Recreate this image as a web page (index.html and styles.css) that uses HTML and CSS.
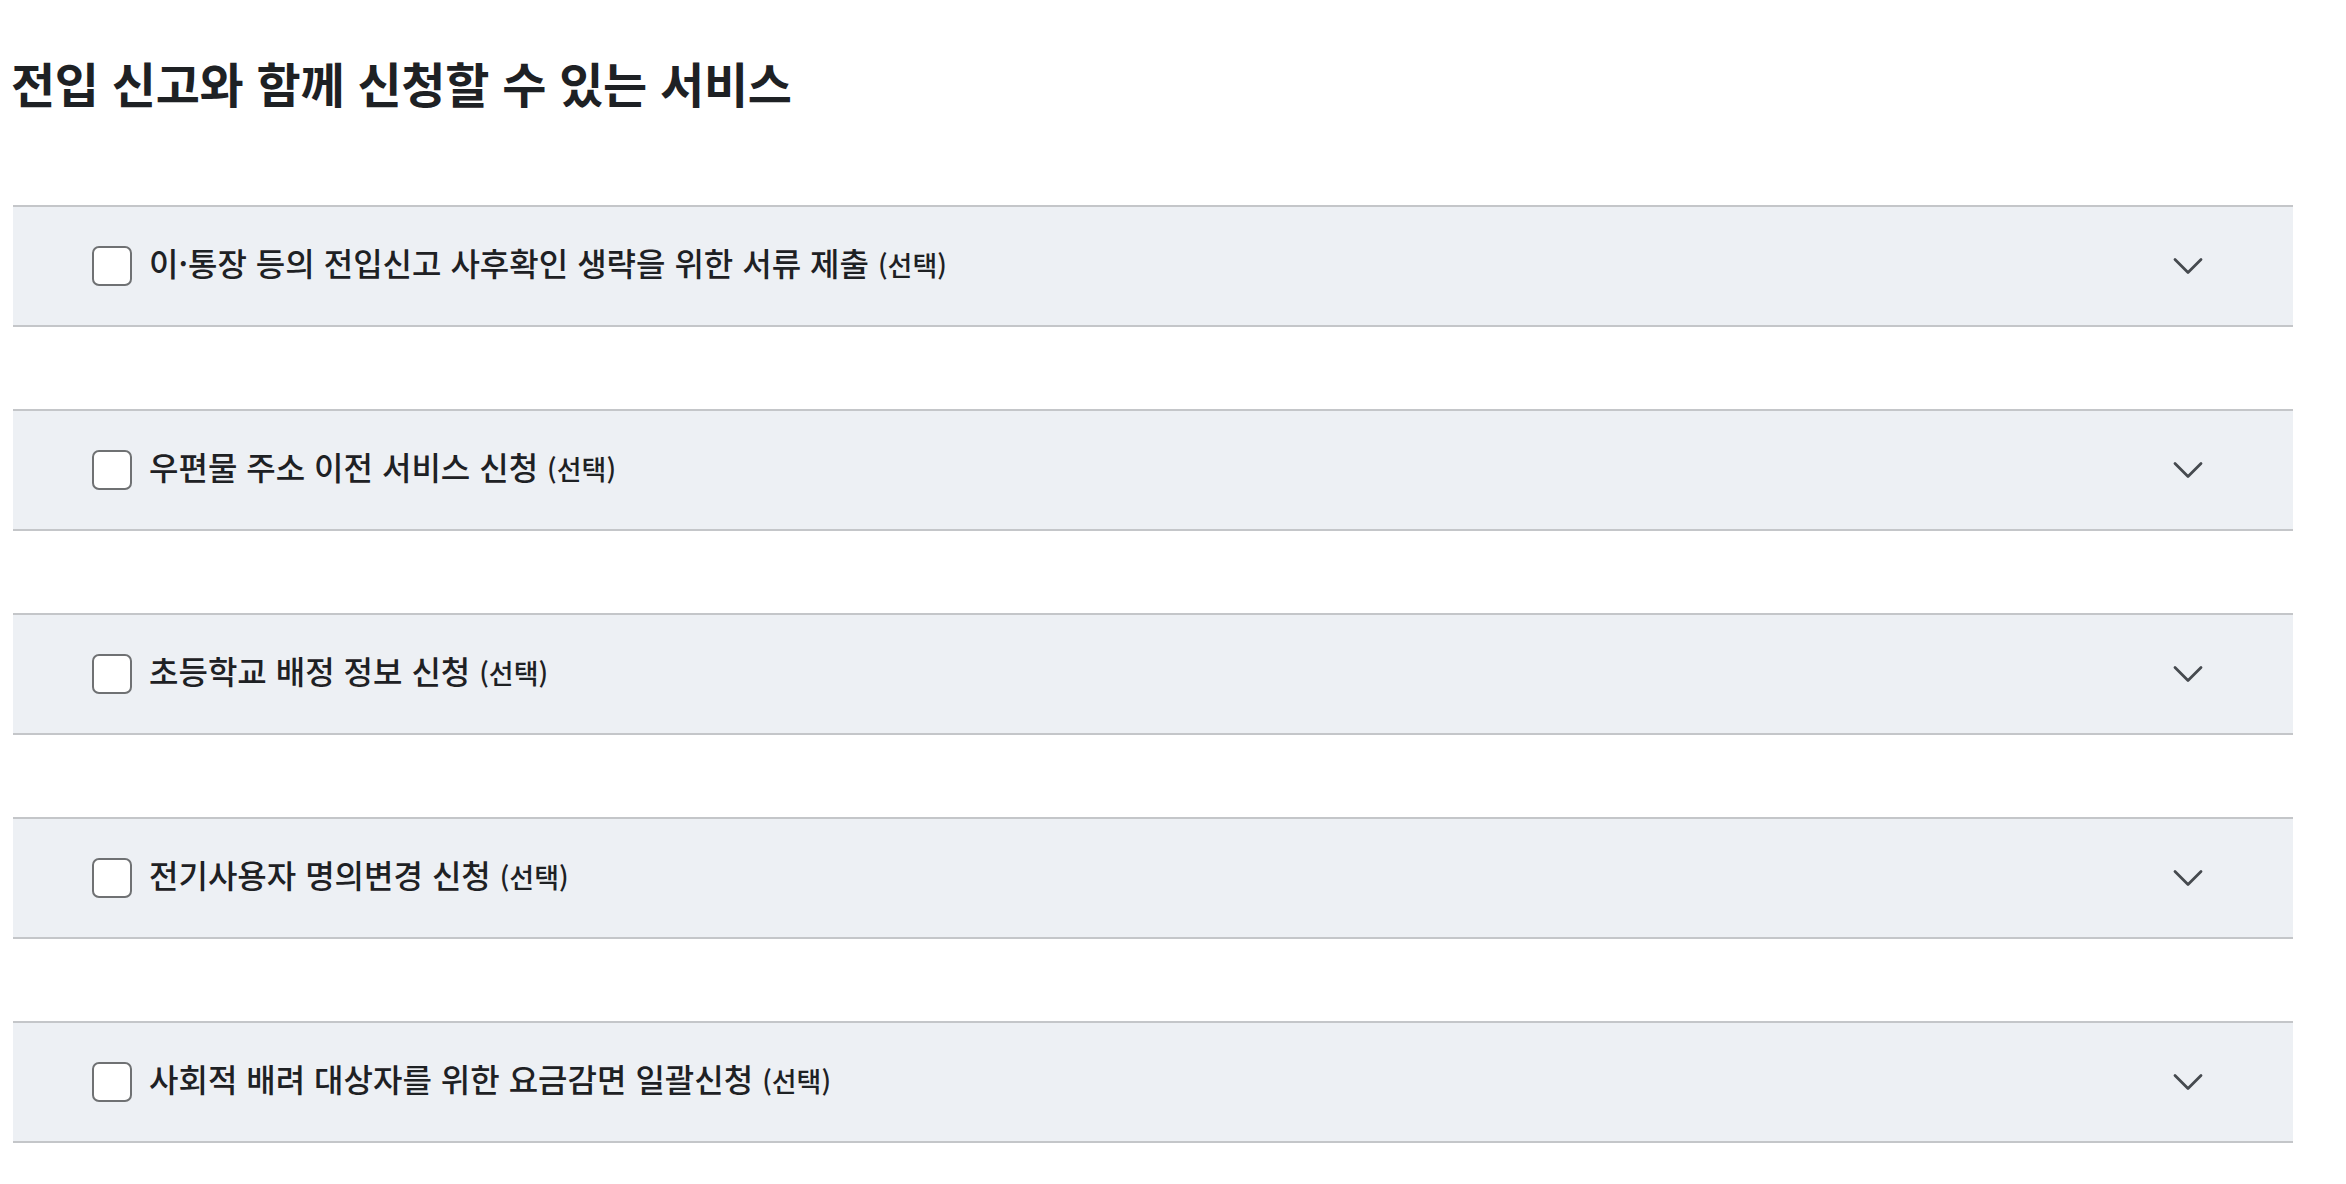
FILE: index.html
```html
<!DOCTYPE html>
<html lang="ko">
<head>
<meta charset="utf-8">
<title>전입 신고와 함께 신청할 수 있는 서비스</title>
<link rel="stylesheet" href="styles.css">
</head>
<body>
<main class="page">
  <h1 class="title">전입 신고와 함께 신청할 수 있는 서비스</h1>
  <ul class="services">
    <li class="item">
      <span class="check"></span>
      <span class="label">이·통장 등의 전입신고 사후확인 생략을 위한 서류 제출 <small class="opt">(선택)</small></span>
      <svg class="chev" viewBox="0 0 30 18" width="30" height="18"><path d="M2 2.5 L15 15.5 L28 2.5"/></svg>
    </li>
    <li class="item">
      <span class="check"></span>
      <span class="label">우편물 주소 이전 서비스 신청 <small class="opt">(선택)</small></span>
      <svg class="chev" viewBox="0 0 30 18" width="30" height="18"><path d="M2 2.5 L15 15.5 L28 2.5"/></svg>
    </li>
    <li class="item">
      <span class="check"></span>
      <span class="label">초등학교 배정 정보 신청 <small class="opt">(선택)</small></span>
      <svg class="chev" viewBox="0 0 30 18" width="30" height="18"><path d="M2 2.5 L15 15.5 L28 2.5"/></svg>
    </li>
    <li class="item">
      <span class="check"></span>
      <span class="label">전기사용자 명의변경 신청 <small class="opt">(선택)</small></span>
      <svg class="chev" viewBox="0 0 30 18" width="30" height="18"><path d="M2 2.5 L15 15.5 L28 2.5"/></svg>
    </li>
    <li class="item">
      <span class="check"></span>
      <span class="label">사회적 배려 대상자를 위한 요금감면 일괄신청 <small class="opt">(선택)</small></span>
      <svg class="chev" viewBox="0 0 30 18" width="30" height="18"><path d="M2 2.5 L15 15.5 L28 2.5"/></svg>
    </li>
  </ul>
</main>
</body>
</html>
```

FILE: styles.css
```css
html, body {
  margin: 0;
  padding: 0;
  background: #ffffff;
}
body {
  font-family: "Noto Sans CJK KR", "Noto Sans", sans-serif;
  color: #1e2124;
}
.page {
  padding: 51px 53px 0 13px;
}
.title {
  margin: 0 0 91px -2px;
  font-size: 48px;
  line-height: 63px;
  font-weight: 700;
  color: #1e2124;
  letter-spacing: -0.3px;
}
.services {
  list-style: none;
  margin: 0;
  padding: 0;
  display: flex;
  flex-direction: column;
  gap: 82px;
}
.item {
  display: flex;
  align-items: center;
  height: 118px;
  background: #edf0f4;
  border-top: 2px solid #c4c6c9;
  border-bottom: 2px solid #c4c6c9;
  padding: 0 90px 0 79px;
}
.check {
  flex: none;
  width: 36px;
  height: 36px;
  border: 2px solid #6f7173;
  border-radius: 7px;
  background: #ffffff;
}
.label {
  flex: 1;
  margin: 0 0 5px 17px;
  font-size: 32px;
  line-height: 42px;
  font-weight: 500;
  color: #1e2124;
}
.opt {
  font-size: 27px;
}
.chev {
  flex: none;
  display: block;
}
.chev path {
  fill: none;
  stroke: #464a4f;
  stroke-width: 2.8;
  stroke-linecap: round;
  stroke-linejoin: round;
}
```
